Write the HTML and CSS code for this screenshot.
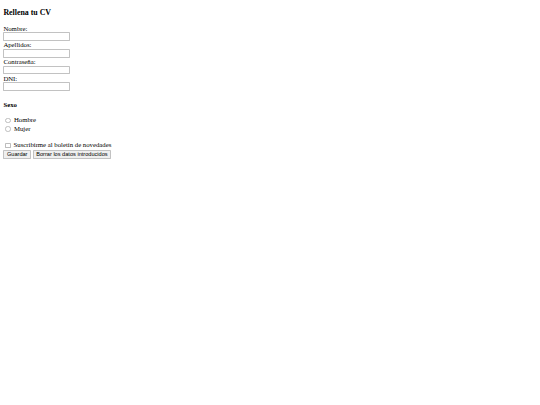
FILE: index.html
```html
<!DOCTYPE html>
<html lang="es">
<head>
<meta charset="utf-8">
<title>Rellena tu CV</title>
<link rel="stylesheet" href="styles.css">
</head>
<body>
<div class="page">
  <h3 class="title">Rellena tu CV</h3>
  <form class="cv-form">
    <label class="field-label">Nombre:</label><br>
    <input class="text-input" type="text"><br>
    <label class="field-label">Apellidos:</label><br>
    <input class="text-input" type="text"><br>
    <label class="field-label">Contraseña:</label><br>
    <input class="text-input" type="password"><br>
    <label class="field-label">DNI:</label><br>
    <input class="text-input" type="text"><br>
    <h4 class="section-title">Sexo</h4>
    <input class="radio" type="radio" name="sexo"> Hombre<br>
    <input class="radio" type="radio" name="sexo"> Mujer<br>
    <div class="spacer"></div>
    <input class="check" type="checkbox"> Suscribirme al boletín de novedades<br>
    <input class="btn" type="submit" value="Guardar">
    <input class="btn" type="reset" value="Borrar los datos introducidos">
  </form>
</div>
</body>
</html>
```
FILE: styles.css
```css
html, body {
  margin: 0;
  padding: 0;
  background: #ffffff;
}
.page {
  zoom: 0.421875;
  margin: 8px;
  font-family: "Liberation Serif", "Times New Roman", serif;
  font-size: 16px;
  color: #000000;
}
.title {
  font-size: 1.17em;
  margin: 1em 0;
}
.section-title {
  font-size: 1em;
  margin: 21.28px 0 18.5px;
}
.text-input {
  font-family: "Liberation Sans", Arial, sans-serif;
  font-size: 13.333px;
  box-sizing: border-box;
  width: 157px;
  height: 21px;
  margin: 1px 0;
  padding: 1px 2px;
  border: 1px solid #c2c2c2;
  border-radius: 2px;
  background: #ffffff;
}
.radio {
  appearance: none;
  -webkit-appearance: none;
  box-sizing: border-box;
  width: 13px;
  height: 13px;
  margin: 6px 3px 0 5px;
  vertical-align: -2px;
  border: 1px solid #bdbdbd;
  border-radius: 50%;
  background: #ffffff;
}
.spacer {
  height: 22.6px;
}
.check {
  appearance: none;
  -webkit-appearance: none;
  box-sizing: border-box;
  width: 13px;
  height: 13px;
  margin: 3px 3px 1px 4px;
  vertical-align: -2px;
  border: 1px solid #bdbdbd;
  border-radius: 2px;
  background: #ffffff;
}
.btn {
  font-family: "Liberation Sans", Arial, sans-serif;
  font-size: 13.333px;
  margin-top: 3px;
  padding: 1px 6px;
  border: 1px solid #c2c2c2;
  border-radius: 2px;
  background: #efefef;
  color: #000000;
}
```
